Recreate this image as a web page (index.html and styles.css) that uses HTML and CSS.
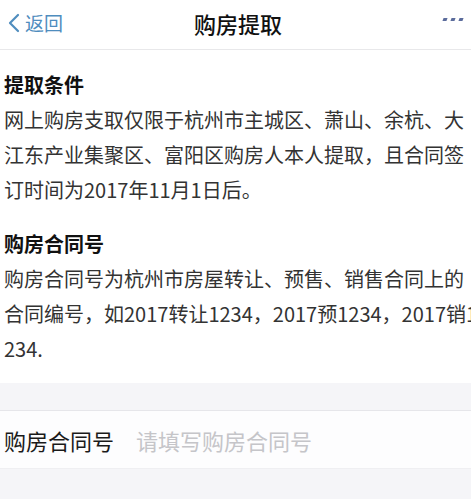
FILE: index.html
```html
<!DOCTYPE html>
<html lang="zh-CN">
<head>
<meta charset="utf-8">
<title>购房提取</title>
<link rel="stylesheet" href="styles.css">
</head>
<body>
<div class="page">
  <header class="nav">
    <a class="back" href="#">
      <svg class="chev" width="14" height="20" viewBox="0 0 14 20"><path d="M11 2 L3 10 L11 18" fill="none" stroke="currentColor" stroke-width="2.2" stroke-linecap="round" stroke-linejoin="round"/></svg>
      <span>返回</span>
    </a>
    <h1 class="title">购房提取</h1>
    <div class="more"><i></i><i></i><i></i></div>
  </header>

  <section class="info">
    <h2 class="info-title">提取条件</h2>
    <p class="info-text">网上购房支取仅限于杭州市主城区、萧山、余杭、大<br>江东产业集聚区、富阳区购房人本人提取，且合同签<br>订时间为2017年11月1日后。</p>
  </section>

  <section class="info">
    <h2 class="info-title">购房合同号</h2>
    <p class="info-text">购房合同号为杭州市房屋转让、预售、销售合同上的<br>合同编号，如2017转让1234，2017预1234，2017销1<br>234.</p>
  </section>

  <div class="form">
    <div class="field">
      <span class="field-label">购房合同号</span>
      <span class="field-placeholder">请填写购房合同号</span>
    </div>
  </div>
</div>
</body>
</html>
```

FILE: styles.css
```css
html, body {
  margin: 0;
  padding: 0;
  background: #ffffff;
}

.page {
  width: 471px;
  height: 499px;
  overflow: hidden;
  display: flex;
  flex-direction: column;
  font-family: "Noto Sans CJK SC", "Noto Sans", sans-serif;
  color: #222;
  background: #fff;
}

.nav {
  height: 45px;
  flex: none;
  display: grid;
  grid-template-columns: 1fr auto 1fr;
  align-items: center;
  border-bottom: 1px solid #e8e8ea;
  padding: 0 6px 4px 7px;
}

.back {
  display: flex;
  align-items: center;
  gap: 4px;
  color: #4f8dbe;
  text-decoration: none;
  font-size: 19px;
  line-height: 1;
}

.chev {
  display: block;
}

.title {
  margin: 0;
  font-size: 22px;
  font-weight: 500;
  color: #111;
  line-height: 1;
  padding-left: 4px;
}

.more {
  justify-self: end;
  display: flex;
  gap: 4px;
  padding-right: 2px;
  margin-top: -6px;
}

.more i {
  width: 4px;
  height: 3px;
  background: #5b6c9c;
  transform: skewX(-20deg);
}

.info {
  padding: 0 0 0 4px;
  white-space: nowrap;
}

.info + .info {
  margin-top: 19px;
}

.info:first-of-type {
  padding-top: 17px;
}

.info-title {
  margin: 0;
  font-size: 20px;
  font-weight: 700;
  line-height: 35px;
  color: #111;
}

.info-text {
  margin: 0;
  font-size: 20px;
  line-height: 35px;
  color: #333;
}

.form {
  flex: 1;
  margin-top: 17px;
  background: #f5f5f8;
  padding-top: 27px;
}

.field {
  height: 57px;
  background: #fdfdfe;
  border-top: 1px solid #e6e6ea;
  border-bottom: 1px solid #efeff2;
  display: flex;
  align-items: center;
  gap: 22px;
  padding-left: 4px;
  font-size: 22px;
}

.field-label {
  color: #1a1a1a;
}

.field-placeholder {
  color: #c5c5c9;
}
```
